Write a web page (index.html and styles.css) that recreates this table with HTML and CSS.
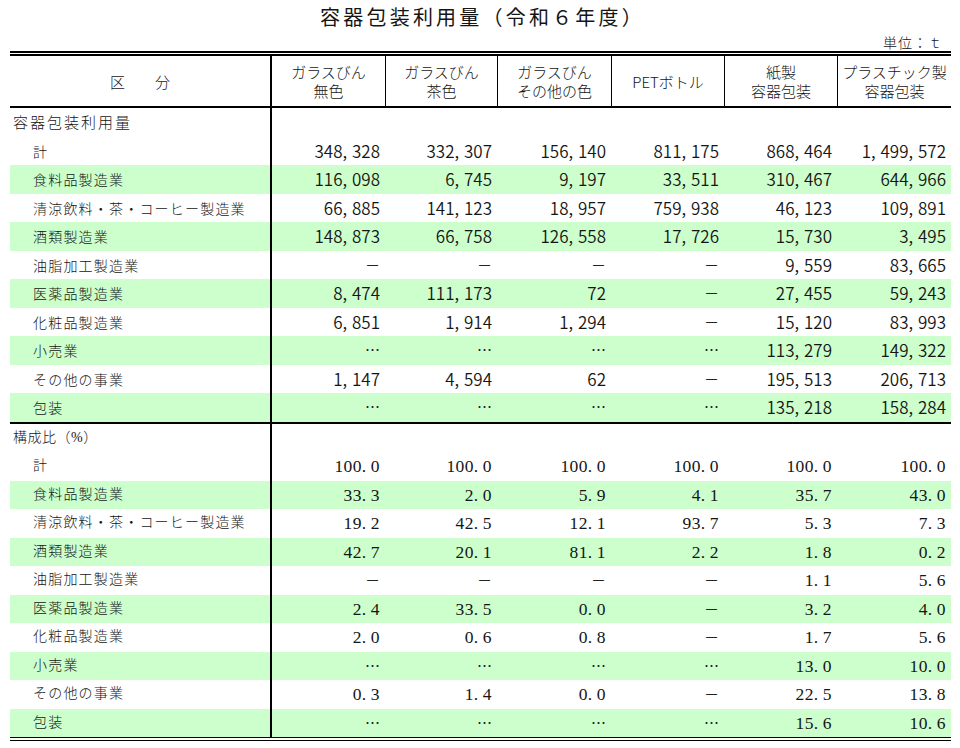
FILE: index.html
```html
<!DOCTYPE html>
<html lang="ja">
<head>
<meta charset="utf-8">
<title>容器包装利用量（令和６年度）</title>
<link rel="stylesheet" href="styles.css">
</head>
<body>
<div class="page">
  <h1 class="title">容器包装利用量（令和６年度）</h1>
  <div class="unit">単位：ｔ</div>
  <table class="stats">
    <colgroup>
      <col class="c-label"><col class="c113"><col class="c112"><col class="c114"><col class="c113"><col class="c113"><col class="c114">
    </colgroup>
    <thead>
      <tr>
        <th class="label">区　　分</th>
        <th>ガラスびん<br>無色</th>
        <th>ガラスびん<br>茶色</th>
        <th>ガラスびん<br>その他の色</th>
        <th>PETボトル</th>
        <th>紙製<br>容器包装</th>
        <th>プラスチック製<br>容器包装</th>
      </tr>
    </thead>
    <tbody class="sec1">
      <tr><td class="label head">容器包装利用量</td><td></td><td></td><td></td><td></td><td></td><td></td></tr>
      <tr><td class="label">計</td><td>348<span class="cm">,</span>328</td><td>332<span class="cm">,</span>307</td><td>156<span class="cm">,</span>140</td><td>811<span class="cm">,</span>175</td><td>868<span class="cm">,</span>464</td><td>1<span class="cm">,</span>499<span class="cm">,</span>572</td></tr>
      <tr class="g"><td class="label">食料品製造業</td><td>116<span class="cm">,</span>098</td><td>6<span class="cm">,</span>745</td><td>9<span class="cm">,</span>197</td><td>33<span class="cm">,</span>511</td><td>310<span class="cm">,</span>467</td><td>644<span class="cm">,</span>966</td></tr>
      <tr><td class="label">清涼飲料・茶・コーヒー製造業</td><td>66<span class="cm">,</span>885</td><td>141<span class="cm">,</span>123</td><td>18<span class="cm">,</span>957</td><td>759<span class="cm">,</span>938</td><td>46<span class="cm">,</span>123</td><td>109<span class="cm">,</span>891</td></tr>
      <tr class="g"><td class="label">酒類製造業</td><td>148<span class="cm">,</span>873</td><td>66<span class="cm">,</span>758</td><td>126<span class="cm">,</span>558</td><td>17<span class="cm">,</span>726</td><td>15<span class="cm">,</span>730</td><td>3<span class="cm">,</span>495</td></tr>
      <tr><td class="label">油脂加工製造業</td><td class="mk">－</td><td class="mk">－</td><td class="mk">－</td><td class="mk">－</td><td>9<span class="cm">,</span>559</td><td>83<span class="cm">,</span>665</td></tr>
      <tr class="g"><td class="label">医薬品製造業</td><td>8<span class="cm">,</span>474</td><td>111<span class="cm">,</span>173</td><td>72</td><td class="mk">－</td><td>27<span class="cm">,</span>455</td><td>59<span class="cm">,</span>243</td></tr>
      <tr><td class="label">化粧品製造業</td><td>6<span class="cm">,</span>851</td><td>1<span class="cm">,</span>914</td><td>1<span class="cm">,</span>294</td><td class="mk">－</td><td>15<span class="cm">,</span>120</td><td>83<span class="cm">,</span>993</td></tr>
      <tr class="g"><td class="label">小売業</td><td class="mk">…</td><td class="mk">…</td><td class="mk">…</td><td class="mk">…</td><td>113<span class="cm">,</span>279</td><td>149<span class="cm">,</span>322</td></tr>
      <tr><td class="label">その他の事業</td><td>1<span class="cm">,</span>147</td><td>4<span class="cm">,</span>594</td><td>62</td><td class="mk">－</td><td>195<span class="cm">,</span>513</td><td>206<span class="cm">,</span>713</td></tr>
      <tr class="g last"><td class="label">包装</td><td class="mk">…</td><td class="mk">…</td><td class="mk">…</td><td class="mk">…</td><td>135<span class="cm">,</span>218</td><td>158<span class="cm">,</span>284</td></tr>
    </tbody>
    <tbody class="sec2">
      <tr><td class="label head2">構成比（%）</td><td></td><td></td><td></td><td></td><td></td><td></td></tr>
      <tr><td class="label">計</td><td>100<span class="pt">.</span>0</td><td>100<span class="pt">.</span>0</td><td>100<span class="pt">.</span>0</td><td>100<span class="pt">.</span>0</td><td>100<span class="pt">.</span>0</td><td>100<span class="pt">.</span>0</td></tr>
      <tr class="g"><td class="label">食料品製造業</td><td>33<span class="pt">.</span>3</td><td>2<span class="pt">.</span>0</td><td>5<span class="pt">.</span>9</td><td>4<span class="pt">.</span>1</td><td>35<span class="pt">.</span>7</td><td>43<span class="pt">.</span>0</td></tr>
      <tr><td class="label">清涼飲料・茶・コーヒー製造業</td><td>19<span class="pt">.</span>2</td><td>42<span class="pt">.</span>5</td><td>12<span class="pt">.</span>1</td><td>93<span class="pt">.</span>7</td><td>5<span class="pt">.</span>3</td><td>7<span class="pt">.</span>3</td></tr>
      <tr class="g"><td class="label">酒類製造業</td><td>42<span class="pt">.</span>7</td><td>20<span class="pt">.</span>1</td><td>81<span class="pt">.</span>1</td><td>2<span class="pt">.</span>2</td><td>1<span class="pt">.</span>8</td><td>0<span class="pt">.</span>2</td></tr>
      <tr><td class="label">油脂加工製造業</td><td class="mk">－</td><td class="mk">－</td><td class="mk">－</td><td class="mk">－</td><td>1<span class="pt">.</span>1</td><td>5<span class="pt">.</span>6</td></tr>
      <tr class="g"><td class="label">医薬品製造業</td><td>2<span class="pt">.</span>4</td><td>33<span class="pt">.</span>5</td><td>0<span class="pt">.</span>0</td><td class="mk">－</td><td>3<span class="pt">.</span>2</td><td>4<span class="pt">.</span>0</td></tr>
      <tr><td class="label">化粧品製造業</td><td>2<span class="pt">.</span>0</td><td>0<span class="pt">.</span>6</td><td>0<span class="pt">.</span>8</td><td class="mk">－</td><td>1<span class="pt">.</span>7</td><td>5<span class="pt">.</span>6</td></tr>
      <tr class="g"><td class="label">小売業</td><td class="mk">…</td><td class="mk">…</td><td class="mk">…</td><td class="mk">…</td><td>13<span class="pt">.</span>0</td><td>10<span class="pt">.</span>0</td></tr>
      <tr><td class="label">その他の事業</td><td>0<span class="pt">.</span>3</td><td>1<span class="pt">.</span>4</td><td>0<span class="pt">.</span>0</td><td class="mk">－</td><td>22<span class="pt">.</span>5</td><td>13<span class="pt">.</span>8</td></tr>
      <tr class="g"><td class="label">包装</td><td class="mk">…</td><td class="mk">…</td><td class="mk">…</td><td class="mk">…</td><td>15<span class="pt">.</span>6</td><td>10<span class="pt">.</span>6</td></tr>
    </tbody>
  </table>
</div>
</body>
</html>
```
FILE: styles.css
```css
html, body {
  margin: 0;
  padding: 0;
  background: #ffffff;
}

body {
  color: #151515;
  font-family: "Noto Sans CJK JP", "Noto Sans", sans-serif;
}

.page {
  width: 941px;
  padding: 0 9px 0 10px;
}

.title {
  margin: 0;
  padding-left: 4px;
  font-size: 20px;
  font-weight: 400;
  line-height: 34px;
  letter-spacing: 3.2px;
  text-align: center;
}

.unit {
  padding-right: 8px;
  font-family: "Noto Sans CJK JP", sans-serif;
  font-size: 14px;
  font-weight: 300;
  line-height: 17px;
  letter-spacing: 1px;
  text-align: right;
}

.stats {
  width: 941px;
  table-layout: fixed;
  border-collapse: separate;
  border-spacing: 0;
  border-top: 5px double #000;
  border-bottom: 4px double #000;
}

.c-label { width: 262px; }
.c112 { width: 112px; }
.c113 { width: 113px; }
.c114 { width: 114px; }

.stats th {
  height: 50px;
  padding: 0;
  font-size: 15px;
  font-weight: 300;
  line-height: 19px;
  text-align: center;
  vertical-align: middle;
  border-bottom: 2px solid #000;
  white-space: nowrap;
}

.stats th + th + th {
  border-left: 1px solid #000;
}

.stats .label {
  border-right: 2px solid #000;
}

.stats th.label {
  letter-spacing: 0;
}

.stats td {
  height: 28.5px;
  padding: 0 5px 0 0;
  line-height: 20px;
  text-align: right;
  vertical-align: middle;
  white-space: nowrap;
}

.stats td.label {
  padding-left: 23px;
  font-size: 14px;
  font-weight: 300;
  letter-spacing: 1.2px;
  text-align: left;
}

.stats td.head {
  padding-left: 3px;
  font-size: 15px;
  letter-spacing: 2px;
}

.stats td.head2 {
  padding-left: 3px;
  font-size: 14px;
  letter-spacing: 0.5px;
}

.stats tr.g td {
  background: #ccffcc;
}

.sec1 tr.last td {
  border-bottom: 2px solid #000;
}

.sec1 td {
  font-family: "Noto Sans CJK JP", sans-serif;
  font-variant-numeric: tabular-nums;
  font-weight: 350;
  font-size: 17px;
}

.cm {
  display: inline-block;
  width: 9.5px;
  text-align: left;
}

.sec2 td {
  font-family: "Liberation Serif", "Noto Sans CJK JP", serif;
  font-size: 17.5px;
  letter-spacing: 0.4px;
}

.stats td.mk {
  font-family: "Noto Sans CJK JP", sans-serif;
  font-variant-numeric: normal;
  font-weight: 400;
  font-size: 15px;
  letter-spacing: 0;
  color: #222;
}

.pt {
  display: inline-block;
  width: 9px;
  text-align: left;
}
```
